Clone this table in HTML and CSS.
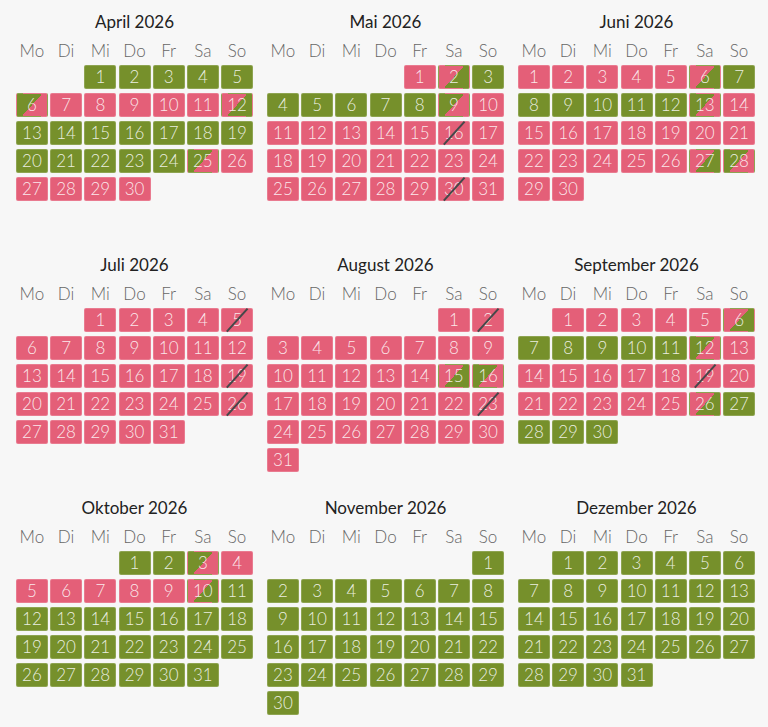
FILE: index.html
```html
<!DOCTYPE html>
<html lang="de">
<head>
<meta charset="utf-8">
<title>Belegungskalender 2026</title>
<link rel="stylesheet" href="styles.css">
</head>
<body>
<div class="year">

<section class="month">
<h2 class="title">April 2026</h2>
<div class="week"><span>Mo</span><span>Di</span><span>Mi</span><span>Do</span><span>Fr</span><span>Sa</span><span>So</span></div>
<div class="days">
<span class="d g c3">1</span><span class="d g">2</span><span class="d g">3</span><span class="d g">4</span><span class="d g">5</span>
<span class="d gp">6</span><span class="d p">7</span><span class="d p">8</span><span class="d p">9</span><span class="d p">10</span><span class="d p">11</span><span class="d pg">12</span>
<span class="d g">13</span><span class="d g">14</span><span class="d g">15</span><span class="d g">16</span><span class="d g">17</span><span class="d g">18</span><span class="d g">19</span>
<span class="d g">20</span><span class="d g">21</span><span class="d g">22</span><span class="d g">23</span><span class="d g">24</span><span class="d gp">25</span><span class="d p">26</span>
<span class="d p">27</span><span class="d p">28</span><span class="d p">29</span><span class="d p">30</span>
</div>
</section>

<section class="month">
<h2 class="title">Mai 2026</h2>
<div class="week"><span>Mo</span><span>Di</span><span>Mi</span><span>Do</span><span>Fr</span><span>Sa</span><span>So</span></div>
<div class="days">
<span class="d p c5">1</span><span class="d pg">2</span><span class="d g">3</span>
<span class="d g">4</span><span class="d g">5</span><span class="d g">6</span><span class="d g">7</span><span class="d g">8</span><span class="d gp">9</span><span class="d p">10</span>
<span class="d p">11</span><span class="d p">12</span><span class="d p">13</span><span class="d p">14</span><span class="d p">15</span><span class="d p x">16</span><span class="d p">17</span>
<span class="d p">18</span><span class="d p">19</span><span class="d p">20</span><span class="d p">21</span><span class="d p">22</span><span class="d p">23</span><span class="d p">24</span>
<span class="d p">25</span><span class="d p">26</span><span class="d p">27</span><span class="d p">28</span><span class="d p">29</span><span class="d p x">30</span><span class="d p">31</span>
</div>
</section>

<section class="month">
<h2 class="title">Juni 2026</h2>
<div class="week"><span>Mo</span><span>Di</span><span>Mi</span><span>Do</span><span>Fr</span><span>Sa</span><span>So</span></div>
<div class="days">
<span class="d p">1</span><span class="d p">2</span><span class="d p">3</span><span class="d p">4</span><span class="d p">5</span><span class="d pg">6</span><span class="d g">7</span>
<span class="d g">8</span><span class="d g">9</span><span class="d g">10</span><span class="d g">11</span><span class="d g">12</span><span class="d gp">13</span><span class="d p">14</span>
<span class="d p">15</span><span class="d p">16</span><span class="d p">17</span><span class="d p">18</span><span class="d p">19</span><span class="d p">20</span><span class="d p">21</span>
<span class="d p">22</span><span class="d p">23</span><span class="d p">24</span><span class="d p">25</span><span class="d p">26</span><span class="d pg">27</span><span class="d gp">28</span>
<span class="d p">29</span><span class="d p">30</span>
</div>
</section>

<section class="month">
<h2 class="title">Juli 2026</h2>
<div class="week"><span>Mo</span><span>Di</span><span>Mi</span><span>Do</span><span>Fr</span><span>Sa</span><span>So</span></div>
<div class="days">
<span class="d p c3">1</span><span class="d p">2</span><span class="d p">3</span><span class="d p">4</span><span class="d p x">5</span>
<span class="d p">6</span><span class="d p">7</span><span class="d p">8</span><span class="d p">9</span><span class="d p">10</span><span class="d p">11</span><span class="d p">12</span>
<span class="d p">13</span><span class="d p">14</span><span class="d p">15</span><span class="d p">16</span><span class="d p">17</span><span class="d p">18</span><span class="d p x">19</span>
<span class="d p">20</span><span class="d p">21</span><span class="d p">22</span><span class="d p">23</span><span class="d p">24</span><span class="d p">25</span><span class="d p x">26</span>
<span class="d p">27</span><span class="d p">28</span><span class="d p">29</span><span class="d p">30</span><span class="d p">31</span>
</div>
</section>

<section class="month">
<h2 class="title">August 2026</h2>
<div class="week"><span>Mo</span><span>Di</span><span>Mi</span><span>Do</span><span>Fr</span><span>Sa</span><span>So</span></div>
<div class="days">
<span class="d p c6">1</span><span class="d p x">2</span>
<span class="d p">3</span><span class="d p">4</span><span class="d p">5</span><span class="d p">6</span><span class="d p">7</span><span class="d p">8</span><span class="d p">9</span>
<span class="d p">10</span><span class="d p">11</span><span class="d p">12</span><span class="d p">13</span><span class="d p">14</span><span class="d pg">15</span><span class="d gp">16</span>
<span class="d p">17</span><span class="d p">18</span><span class="d p">19</span><span class="d p">20</span><span class="d p">21</span><span class="d p">22</span><span class="d p x">23</span>
<span class="d p">24</span><span class="d p">25</span><span class="d p">26</span><span class="d p">27</span><span class="d p">28</span><span class="d p">29</span><span class="d p">30</span>
<span class="d p">31</span>
</div>
</section>

<section class="month">
<h2 class="title">September 2026</h2>
<div class="week"><span>Mo</span><span>Di</span><span>Mi</span><span>Do</span><span>Fr</span><span>Sa</span><span>So</span></div>
<div class="days">
<span class="d p c2">1</span><span class="d p">2</span><span class="d p">3</span><span class="d p">4</span><span class="d p">5</span><span class="d pg">6</span>
<span class="d g">7</span><span class="d g">8</span><span class="d g">9</span><span class="d g">10</span><span class="d g">11</span><span class="d gp">12</span><span class="d p">13</span>
<span class="d p">14</span><span class="d p">15</span><span class="d p">16</span><span class="d p">17</span><span class="d p">18</span><span class="d p x">19</span><span class="d p">20</span>
<span class="d p">21</span><span class="d p">22</span><span class="d p">23</span><span class="d p">24</span><span class="d p">25</span><span class="d pg">26</span><span class="d g">27</span>
<span class="d g">28</span><span class="d g">29</span><span class="d g">30</span>
</div>
</section>

<section class="month">
<h2 class="title">Oktober 2026</h2>
<div class="week"><span>Mo</span><span>Di</span><span>Mi</span><span>Do</span><span>Fr</span><span>Sa</span><span>So</span></div>
<div class="days">
<span class="d g c4">1</span><span class="d g">2</span><span class="d gp">3</span><span class="d p">4</span>
<span class="d p">5</span><span class="d p">6</span><span class="d p">7</span><span class="d p">8</span><span class="d p">9</span><span class="d pg">10</span><span class="d g">11</span>
<span class="d g">12</span><span class="d g">13</span><span class="d g">14</span><span class="d g">15</span><span class="d g">16</span><span class="d g">17</span><span class="d g">18</span>
<span class="d g">19</span><span class="d g">20</span><span class="d g">21</span><span class="d g">22</span><span class="d g">23</span><span class="d g">24</span><span class="d g">25</span>
<span class="d g">26</span><span class="d g">27</span><span class="d g">28</span><span class="d g">29</span><span class="d g">30</span><span class="d g">31</span>
</div>
</section>

<section class="month">
<h2 class="title">November 2026</h2>
<div class="week"><span>Mo</span><span>Di</span><span>Mi</span><span>Do</span><span>Fr</span><span>Sa</span><span>So</span></div>
<div class="days">
<span class="d g c7">1</span>
<span class="d g">2</span><span class="d g">3</span><span class="d g">4</span><span class="d g">5</span><span class="d g">6</span><span class="d g">7</span><span class="d g">8</span>
<span class="d g">9</span><span class="d g">10</span><span class="d g">11</span><span class="d g">12</span><span class="d g">13</span><span class="d g">14</span><span class="d g">15</span>
<span class="d g">16</span><span class="d g">17</span><span class="d g">18</span><span class="d g">19</span><span class="d g">20</span><span class="d g">21</span><span class="d g">22</span>
<span class="d g">23</span><span class="d g">24</span><span class="d g">25</span><span class="d g">26</span><span class="d g">27</span><span class="d g">28</span><span class="d g">29</span>
<span class="d g">30</span>
</div>
</section>

<section class="month">
<h2 class="title">Dezember 2026</h2>
<div class="week"><span>Mo</span><span>Di</span><span>Mi</span><span>Do</span><span>Fr</span><span>Sa</span><span>So</span></div>
<div class="days">
<span class="d g c2">1</span><span class="d g">2</span><span class="d g">3</span><span class="d g">4</span><span class="d g">5</span><span class="d g">6</span>
<span class="d g">7</span><span class="d g">8</span><span class="d g">9</span><span class="d g">10</span><span class="d g">11</span><span class="d g">12</span><span class="d g">13</span>
<span class="d g">14</span><span class="d g">15</span><span class="d g">16</span><span class="d g">17</span><span class="d g">18</span><span class="d g">19</span><span class="d g">20</span>
<span class="d g">21</span><span class="d g">22</span><span class="d g">23</span><span class="d g">24</span><span class="d g">25</span><span class="d g">26</span><span class="d g">27</span>
<span class="d g">28</span><span class="d g">29</span><span class="d g">30</span><span class="d g">31</span>
</div>
</section>

</div>
</body>
</html>
```

FILE: styles.css
```css
html, body {
  margin: 0;
  padding: 0;
  background: #f7f7f7;
}

body {
  font-family: Lato, "Open Sans", "Liberation Sans", sans-serif;
}

.year {
  display: grid;
  grid-template-columns: repeat(3, 251px);
  grid-auto-rows: 243px;
  padding-left: 9px;
}

.month {
  display: flex;
  flex-direction: column;
  align-items: center;
  padding-top: 9px;
}

.title {
  margin: 0 0 4px;
  height: 26px;
  font-size: 17px;
  line-height: 26px;
  font-weight: 400;
  color: #222;
}

.week,
.days {
  display: grid;
  grid-template-columns: repeat(7, 32px);
  column-gap: 2.2px;
}

.week span {
  font-size: 17px;
  line-height: 24px;
  font-weight: 300;
  color: #666;
  text-align: center;
}

.days {
  margin-top: 2px;
  row-gap: 4px;
  grid-auto-rows: 24px;
}

.d {
  position: relative;
  box-sizing: border-box;
  border-radius: 2px;
  border: 1px solid rgba(255, 255, 255, 0.18);
  font-size: 17px;
  line-height: 22px;
  font-weight: 300;
  color: rgba(255, 255, 255, 0.86);
  text-align: center;
}

.g { background: #76902b; }
.p { background: #e45f78; }
.gp { background: linear-gradient(132deg, #76902b 50%, #e45f78 50%); }
.pg { background: linear-gradient(132deg, #e45f78 50%, #76902b 50%); }

.x::after {
  content: "";
  position: absolute;
  left: 50%;
  top: 50%;
  width: 31px;
  height: 1.5px;
  background: #44484a;
  transform: translate(-50%, -50%) rotate(-48deg);
}

.c2 { grid-column-start: 2; }
.c3 { grid-column-start: 3; }
.c4 { grid-column-start: 4; }
.c5 { grid-column-start: 5; }
.c6 { grid-column-start: 6; }
.c7 { grid-column-start: 7; }
```
